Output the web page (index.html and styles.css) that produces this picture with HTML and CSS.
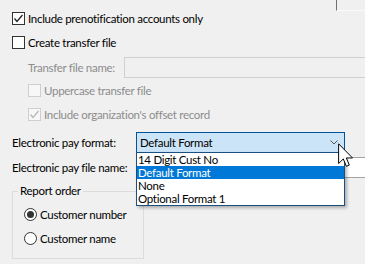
FILE: index.html
```html
<!DOCTYPE html>
<html>
<head>
<meta charset="utf-8">
<link rel="stylesheet" href="styles.css">
</head>
<body>
<div class="page">
  <div class="topstrip"><div class="corner"></div></div>
  <div class="rows">
    <div class="check-row r1">
      <span class="cb"><svg viewBox="0 0 11 11" width="11" height="11"><path d="M1.5 5.5 L4 8.5 L9.5 2" fill="none" stroke="#222" stroke-width="1.3"/></svg></span>
      <span class="txt">Include prenotification accounts only</span>
    </div>
    <div class="check-row r2">
      <span class="cb"></span>
      <span class="txt">Create transfer file</span>
    </div>
    <div class="field-row indent r3">
      <span class="lbl lbl-tf dis-text">Transfer file name:</span>
      <span class="tbox tbox-dis"></span>
    </div>
    <div class="check-row indent r4">
      <span class="cb cb-dis"></span>
      <span class="txt dis-text">Uppercase transfer file</span>
    </div>
    <div class="check-row indent r5">
      <span class="cb cb-dis"><svg viewBox="0 0 11 11" width="11" height="11"><path d="M1.5 5.5 L4 8.5 L9.5 2" fill="none" stroke="#b8b8b8" stroke-width="1.3"/></svg></span>
      <span class="txt dis-text">Include organization's offset record</span>
    </div>
    <div class="field-row r6">
      <span class="lbl lbl-main">Electronic pay format:</span>
      <div class="combo">
        <span class="combo-text">Default Format</span>
        <svg class="chev" viewBox="0 0 8 5" width="8" height="5"><path d="M0.5 0.5 L4 4 L7.5 0.5" fill="none" stroke="#555" stroke-width="1"/></svg>
        <div class="droplist">
          <div class="item">14 Digit Cust No</div>
          <div class="item sel">Default Format</div>
          <div class="item">None</div>
          <div class="item">Optional Format 1</div>
        </div>
      </div>
    </div>
    <div class="field-row r7">
      <span class="lbl lbl-main">Electronic pay file name:</span>
      <span class="tbox tbox-white"></span>
    </div>
    <fieldset class="group">
      <legend>Report order</legend>
      <div class="radio-row rr1">
        <span class="rb on"><span class="dot"></span></span>
        <span class="txt">Customer number</span>
      </div>
      <div class="radio-row rr2">
        <span class="rb"></span>
        <span class="txt">Customer name</span>
      </div>
    </fieldset>
  </div>
  <svg class="cursor" viewBox="0 0 13 20" width="16" height="25"><path d="M0.5 0.5 L0.5 16.5 L4.3 12.8 L6.8 18.8 L9.2 17.8 L6.8 12 L11.8 12 Z" fill="#fff" stroke="#000" stroke-width="0.8" stroke-linejoin="miter"/></svg>
</div>
</body>
</html>
```

FILE: styles.css
```css
html, body {
  margin: 0;
  padding: 0;
  background: #f0f0f0;
  overflow: hidden;
}
body {
  width: 365px;
  height: 264px;
  font-family: Lato, "Noto Sans", sans-serif;
  font-size: 11.5px;
  letter-spacing: -0.3px;
  color: #000;
}
.page {
  position: relative;
  width: 365px;
  height: 264px;
  overflow: hidden;
}
.topstrip {
  height: 12px;
  display: flex;
  justify-content: flex-end;
}
.corner {
  width: 28px;
  height: 10px;
  border-left: 1px solid #707070;
  border-bottom: 1px solid #fafafa;
}
.rows {
  padding-left: 12px;
  display: flex;
  flex-direction: column;
}
.check-row {
  display: flex;
  align-items: center;
  height: 13px;
  gap: 3px;
  white-space: nowrap;
}
.indent { padding-left: 16px; }
.txt { line-height: 13px; }
.lbl { white-space: nowrap; }
.dis-text { color: #8c8c8c; }
.cb {
  box-sizing: border-box;
  width: 13px;
  height: 13px;
  border: 1px solid #333;
  background: #fff;
  display: flex;
  align-items: center;
  justify-content: center;
  flex: none;
}
.cb svg { display: block; }
.cb-dis {
  border-color: #cfcfcf;
  background: #f7f7f7;
}
.r2 { margin-top: 11px; }
.r3 { margin-top: 8px; }
.r4 { margin-top: 6px; }
.r5 { margin-top: 11px; }
.r6 { margin-top: 11px; }
.r7 { margin-top: 4px; }
.field-row {
  display: flex;
  align-items: center;
  height: 21px;
}
.lbl-tf { width: 96px; flex: none; }
.lbl-main { width: 124px; flex: none; }
.tbox {
  box-sizing: border-box;
  height: 21px;
  width: 260px;
  flex: none;
}
.tbox-dis {
  border: 1px solid #d0d0d0;
  background: #f0f0f0;
}
.tbox-white {
  border: 1px solid #a3a3a3;
  background: #fff;
}
.combo {
  position: relative;
  box-sizing: border-box;
  width: 209px;
  height: 21px;
  flex: none;
  border: 1px solid #005499;
  background: #cce4f7;
  display: flex;
  align-items: center;
  padding-left: 3px;
  z-index: 2;
}
.combo-text { white-space: nowrap; }
.chev {
  margin-left: auto;
  margin-right: 6px;
  display: block;
}
.droplist {
  position: absolute;
  left: -1px;
  top: 19px;
  box-sizing: border-box;
  width: 209px;
  border: 1px solid #1b4f80;
  background: #fff;
  box-shadow: 2px 2px 3px rgba(0, 0, 0, 0.28);
}
.item {
  height: 13px;
  line-height: 13px;
  padding-left: 1px;
  white-space: nowrap;
}
.item.sel {
  background: #0078d7;
  color: #fff;
}
.group {
  margin: 5px 0 0 0;
  box-sizing: border-box;
  width: 132px;
  border: 1px solid #dcdcdc;
  padding: 0 0 13px 5px;
  min-width: 0;
}
.group legend {
  padding: 0 2px;
  line-height: 16px;
  white-space: nowrap;
}
.radio-row {
  display: flex;
  align-items: center;
  height: 13px;
  gap: 3px;
  margin-left: 6px;
  white-space: nowrap;
}
.rr1 { margin-top: 9px; }
.rr2 { margin-top: 11px; }
.rb {
  box-sizing: border-box;
  width: 13px;
  height: 13px;
  border: 1px solid #333;
  border-radius: 50%;
  background: #fff;
  display: flex;
  align-items: center;
  justify-content: center;
  flex: none;
}
.dot {
  width: 7px;
  height: 7px;
  border-radius: 50%;
  background: #333;
}
.cursor {
  position: absolute;
  left: 338px;
  top: 143px;
  z-index: 5;
}
```
